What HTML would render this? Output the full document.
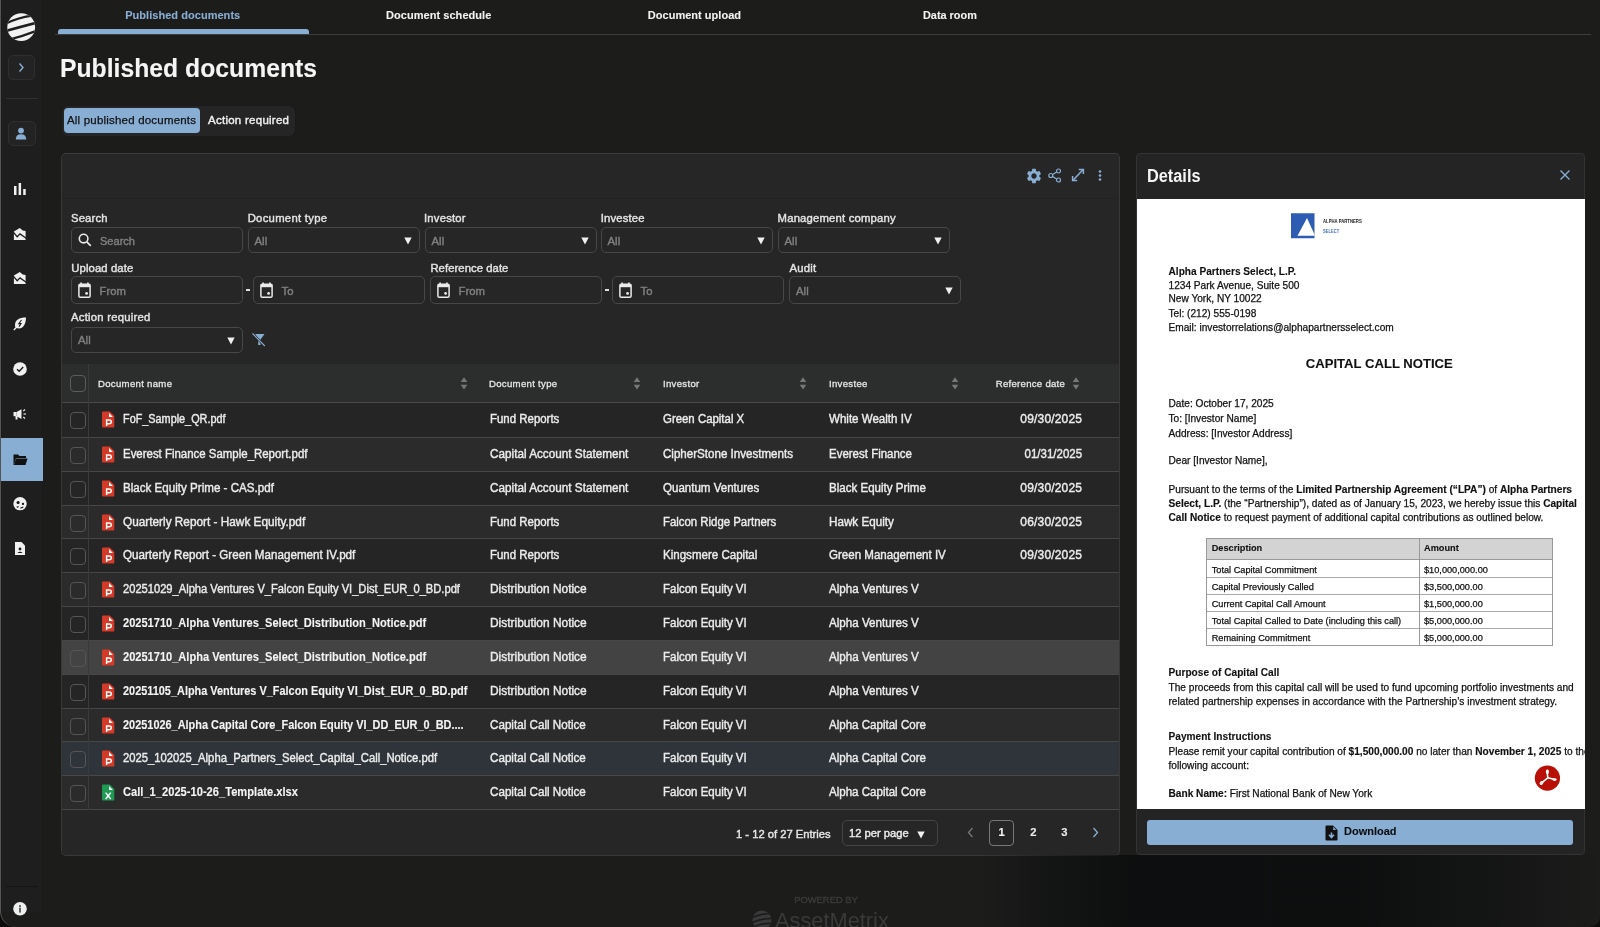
<!DOCTYPE html>
<html><head><meta charset="utf-8">
<style>
*{box-sizing:border-box;margin:0;padding:0}
html,body{width:1600px;height:927px;overflow:hidden;background:#1c1c1c;font-family:"Liberation Sans",sans-serif;color:#ececec}
.a{position:absolute}
.t{line-height:20px;white-space:nowrap;-webkit-text-stroke:0.4px currentColor}
.t b{-webkit-text-stroke:0.15px currentColor}
.d{-webkit-text-stroke:0.12px currentColor}
#wrap{position:absolute;left:0;top:0;width:1600px;height:927px;will-change:transform;background:#1c1c1c;overflow:hidden}
svg{display:block}
</style></head>
<body><div id="wrap">

<div class="a" style="left:0px;top:0px;width:1600px;height:927px;background:#1c1c1c"></div>
<div class="a" style="left:0px;top:0px;width:1600px;height:927px;background:#0c0c0c"></div>
<div class="a" style="left:0px;top:0px;width:1600px;height:927px;background:#1c1c1b;border-left:1.5px solid #555;border-bottom-left-radius:16px;border-bottom-right-radius:10px"></div>
<div class="a" style="left:1.5px;top:0px;width:41px;height:912px;background:#1e1e1e;border-right:1px solid #1a1a1a"></div>
<svg class="a" style="left:6px;top:12px" width="30" height="30" viewBox="0 0 30 30">
<defs><clipPath id="lc"><circle cx="15.2" cy="15.2" r="13.9"/></clipPath></defs>
<g clip-path="url(#lc)">
<rect width="30" height="30" fill="#f2f2f2"/>
<path d="M0.5 11.2 Q11 6 26 3.6" fill="none" stroke="#1e1e1e" stroke-width="2.3"/>
<path d="M-1 19.3 Q13 15.2 31 10.6" fill="none" stroke="#1e1e1e" stroke-width="2.6"/>
<path d="M3 27.6 Q17 24.2 31 18.6" fill="none" stroke="#1e1e1e" stroke-width="2.4"/>
</g></svg>
<div class="a" style="left:8px;top:55px;width:27px;height:25px;background:#232323;border:1px solid #2f2f2f;border-radius:5px"></div>
<svg class="a" style="left:16px;top:62px" width="10" height="11" viewBox="0 0 10 11"><path d="M3.5 1.5 L7 5.5 L3.5 9.5" fill="none" stroke="#89aed4" stroke-width="1.4"/></svg>
<div class="a" style="left:6px;top:98px;width:32px;height:1px;background:#303030"></div>
<div class="a" style="left:8px;top:121px;width:28px;height:25px;background:#232323;border:1px solid #2f2f2f;border-radius:5px"></div>
<svg class="a" style="left:15px;top:127px" width="12" height="13" viewBox="0 0 12 13"><circle cx="6" cy="3.6" r="2.9" fill="#89aed4"/><path d="M0.8 12.5 Q0.8 7.3 6 7.3 Q11.2 7.3 11.2 12.5 Z" fill="#89aed4"/></svg>
<svg class="a" style="left:13px;top:182px" width="14" height="14" viewBox="0 0 14 14" fill="#f0f0f0"><rect x="1" y="4" width="2.5" height="9"/><rect x="5.6" y="1" width="2.5" height="12"/><rect x="10.2" y="7" width="2.5" height="6"/></svg>
<svg class="a" style="left:13px;top:227px" width="14" height="14" viewBox="0 0 14 14"><path d="M0.9 4.6 L6.8 1 L9.7 3.6 L12.6 4 L12.6 13 L0.9 13 Z" fill="#f0f0f0"/><path d="M0.3 5.2 L4.2 9.7 L7 6.9 L13.2 11.2" stroke="#1e1e1e" stroke-width="1.3" fill="none"/></svg>
<svg class="a" style="left:13px;top:271px" width="14" height="14" viewBox="0 0 14 14"><path d="M0.9 4.6 L6.8 1 L9.7 3.6 L12.6 4 L12.6 13 L0.9 13 Z" fill="#f0f0f0"/><path d="M0.3 5.2 L4.2 9.7 L7 6.9 L13.2 11.2" stroke="#1e1e1e" stroke-width="1.3" fill="none"/></svg>
<svg class="a" style="left:13px;top:316px" width="14" height="15" viewBox="0 0 14 15"><path d="M2 9 C2 4 6 1.5 13 1.5 C13 8 10 12.5 6 12.5 C4 12.5 2.8 11.5 2 10.5 Z" fill="#f0f0f0"/><path d="M0.8 14 L4 10.8" stroke="#f0f0f0" stroke-width="1.4"/><path d="M8.5 4 L5.8 7.6 L8 7.6 L6 10.6" fill="none" stroke="#1a1a1a" stroke-width="1.1"/></svg>
<svg class="a" style="left:13px;top:362px" width="14" height="14" viewBox="0 0 14 14"><circle cx="7" cy="7" r="6.8" fill="#f0f0f0"/><path d="M4 7.2 L6.2 9.2 L10.2 5" fill="none" stroke="#1a1a1a" stroke-width="1.4"/></svg>
<svg class="a" style="left:13px;top:407px" width="14" height="14" viewBox="0 0 14 14" fill="#f0f0f0"><rect x="0.5" y="5" width="3" height="4.2"/><path d="M3.5 5 L8.5 2.2 L8.5 12 L3.5 9.2 Z"/><rect x="2.5" y="9" width="2" height="3.5"/><path d="M10.3 4 L12 2.5" stroke="#f0f0f0" stroke-width="1.1"/><path d="M10.5 7 L13 7" stroke="#f0f0f0" stroke-width="1.1"/><path d="M10.3 10 L12 11.5" stroke="#f0f0f0" stroke-width="1.1"/></svg>
<div class="a" style="left:1px;top:438px;width:42px;height:43px;background:#89aed4"></div>
<svg class="a" style="left:13px;top:453px" width="15" height="13" viewBox="0 0 15 13"><path d="M0.5 1.5 L5 1.5 L6.5 3 L13 3 L13 5 L3 5 L1 12 L0.5 12 Z" fill="#111"/><path d="M3 5.5 L14.5 5.5 L12.5 12 L1 12 Z" fill="#111"/></svg>
<svg class="a" style="left:12px;top:496px" width="15" height="15" viewBox="0 0 15 15"><circle cx="8.05" cy="7.66" r="6.7" fill="#f0f0f0"/><circle cx="6.1" cy="6.5" r="1.55" fill="#111"/><circle cx="11" cy="7.9" r="1.15" fill="#111"/><path d="M4.2 10.8 L7 10.1 L5.8 12.1 Z" fill="#111"/><path d="M8.4 12.3 L11.3 10.9" stroke="#111" stroke-width="1.1"/></svg>
<svg class="a" style="left:14px;top:541px" width="12" height="15" viewBox="0 0 12 15"><path d="M1 1 L7.5 1 L11 4.5 L11 14 L1 14 Z" fill="#f0f0f0"/><circle cx="6" cy="8" r="1.4" fill="#1a1a1a"/><path d="M3.3 12 Q6 9.6 8.7 12 Z" fill="#1a1a1a"/></svg>
<div class="a" style="left:6px;top:886px;width:32px;height:1px;background:#141414"></div>
<svg class="a" style="left:13px;top:902px" width="14" height="14" viewBox="0 0 14 14"><circle cx="7" cy="6.8" r="6.8" fill="#eef0f0"/><circle cx="7" cy="3.9" r="1" fill="#444"/><rect x="6.2" y="5.6" width="1.6" height="5" fill="#444"/></svg>
<div class="a" style="left:55px;top:34px;width:1536px;height:1px;background:#3d3d3d"></div>
<div class="a" style="left:58px;top:29px;width:251px;height:5px;background:#89aed4;border-radius:3px 3px 0 0"></div>
<div class="a t" style="left:125.2px;top:5.00px;font-size:11px;color:#89aed4;font-weight:bold;-webkit-text-stroke:0.1px currentColor;letter-spacing:0.040px;">Published documents</div>
<div class="a t" style="left:385.95px;top:5.00px;font-size:11px;color:#f2f2f2;font-weight:bold;-webkit-text-stroke:0.1px currentColor;letter-spacing:0.055px;">Document schedule</div>
<div class="a t" style="left:647.8000000000001px;top:5.00px;font-size:11px;color:#f2f2f2;font-weight:bold;-webkit-text-stroke:0.1px currentColor;letter-spacing:0.023px;">Document upload</div>
<div class="a t" style="left:923.4000000000001px;top:5.00px;font-size:11px;color:#f2f2f2;font-weight:bold;-webkit-text-stroke:0.1px currentColor;transform:scaleX(0.9890);transform-origin:0 0;">Data room</div>
<div class="a t" style="left:59.7px;top:58.00px;font-size:25.5px;color:#f5f5f5;font-weight:bold;-webkit-text-stroke:0.1px currentColor;transform:scaleX(0.9701);transform-origin:0 0;">Published documents</div>
<div class="a" style="left:61.5px;top:105.8px;width:233.3px;height:30px;background:#252525;border-radius:6px;box-shadow:0 0 0 1px #1a1a1a"></div>
<div class="a" style="left:63.6px;top:108.3px;width:136.4px;height:24.7px;background:#89aed4;border-radius:4px"></div>
<div class="a t" style="left:67px;top:110.00px;font-size:11.5px;color:#111;-webkit-text-stroke:0.25px currentColor;letter-spacing:0.198px;">All published documents</div>
<div class="a t" style="left:208px;top:110.00px;font-size:11.5px;color:#f0f0f0;letter-spacing:0.261px;">Action required</div>
<div class="a" style="left:61px;top:153px;width:1059px;height:703px;background:#262626;border:1px solid #383838;border-top-color:#3c3c3c;border-radius:5px"></div>
<div class="a" style="left:62px;top:198px;width:1056px;height:1px;background:#222"></div>
<svg class="a" style="left:1025px;top:166.5px" width="18" height="18" viewBox="0 0 24 24"><path fill="#89aed4" d="M19.14 12.94c.04-.3.06-.61.06-.94 0-.32-.02-.64-.07-.94l2.03-1.58a.49.49 0 0 0 .12-.61l-1.92-3.32a.488.488 0 0 0-.59-.22l-2.39.96c-.5-.38-1.03-.7-1.62-.94l-.36-2.54a.484.484 0 0 0-.48-.41h-3.84c-.24 0-.43.17-.47.41l-.36 2.54c-.59.24-1.13.57-1.62.94l-2.39-.96c-.22-.08-.47 0-.59.22L2.74 8.87c-.12.21-.08.47.12.61l2.03 1.58c-.05.3-.09.63-.09.94s.02.64.07.94l-2.03 1.58a.49.49 0 0 0-.12.61l1.92 3.32c.12.22.37.29.59.22l2.39-.96c.5.38 1.03.7 1.62.94l.36 2.54c.05.24.24.41.48.41h3.84c.24 0 .44-.17.47-.41l.36-2.54c.59-.24 1.13-.56 1.62-.94l2.39.96c.22.08.47 0 .59-.22l1.92-3.32c.12-.22.07-.47-.12-.61l-2.01-1.58zM12 15.6c-1.98 0-3.6-1.62-3.6-3.6s1.62-3.6 3.6-3.6 3.6 1.62 3.6 3.6-1.62 3.6-3.6 3.6z"/></svg>
<svg class="a" style="left:1048px;top:168px" width="14" height="15" viewBox="0 0 14 15"><g fill="none" stroke="#89aed4" stroke-width="1.2"><circle cx="10.5" cy="3" r="2"/><circle cx="2.8" cy="7.5" r="2"/><circle cx="10.5" cy="12" r="2"/><path d="M4.6 6.5 L8.7 4 M4.6 8.5 L8.7 11"/></g></svg>
<svg class="a" style="left:1071px;top:168px" width="14" height="15" viewBox="0 0 14 15"><g fill="none" stroke="#89aed4" stroke-width="1.5"><path d="M7.8 1.4 L12.4 1.4 L12.4 6"/><path d="M12.2 1.6 L1.8 12.6"/><path d="M1.6 8 L1.6 12.6 L6.2 12.6"/></g></svg>
<svg class="a" style="left:1097px;top:169px" width="6" height="13" viewBox="0 0 6 13"><g fill="#89aed4"><circle cx="3" cy="2.5" r="1.3"/><circle cx="3" cy="6.5" r="1.3"/><circle cx="3" cy="10.5" r="1.3"/></g></svg>
<div class="a t" style="left:71px;top:208.00px;font-size:11.3px;color:#e4e4e4;letter-spacing:0.140px;">Search</div>
<div class="a t" style="left:247.7px;top:208.00px;font-size:11.3px;color:#e4e4e4;letter-spacing:0.275px;">Document type</div>
<div class="a t" style="left:424px;top:208.00px;font-size:11.3px;color:#e4e4e4;letter-spacing:0.201px;">Investor</div>
<div class="a t" style="left:600.8px;top:208.00px;font-size:11.3px;color:#e4e4e4;letter-spacing:0.141px;">Investee</div>
<div class="a t" style="left:777.6px;top:208.00px;font-size:11.3px;color:#e4e4e4;letter-spacing:0.180px;">Management company</div>
<div class="a" style="left:71px;top:227px;width:172px;height:26px;border:1px solid #474747;border-radius:5px"></div>
<svg class="a" style="left:78px;top:233px" width="14" height="14" viewBox="0 0 14 14"><circle cx="5.6" cy="5.6" r="4.3" fill="none" stroke="#e8e8e8" stroke-width="1.6"/><path d="M8.8 8.8 L12.8 12.8" stroke="#e8e8e8" stroke-width="1.7"/></svg>
<div class="a t" style="left:100px;top:231.00px;font-size:11.3px;color:#808080;transform:scaleX(0.9776);transform-origin:0 0;">Search</div>
<div class="a" style="left:248px;top:227px;width:172px;height:26px;border:1px solid #474747;border-radius:5px"></div>
<div class="a t" style="left:254.5px;top:231.00px;font-size:11.3px;color:#808080;letter-spacing:0.071px;">All</div>
<svg class="a" style="left:404px;top:237px" width="8" height="8" viewBox="0 0 8 8"><path d="M0.3 0.5 L7.7 0.5 L4 7.5 Z" fill="#f0f0f0"/></svg>
<div class="a" style="left:425px;top:227px;width:172px;height:26px;border:1px solid #474747;border-radius:5px"></div>
<div class="a t" style="left:431.5px;top:231.00px;font-size:11.3px;color:#808080;letter-spacing:0.071px;">All</div>
<svg class="a" style="left:581px;top:237px" width="8" height="8" viewBox="0 0 8 8"><path d="M0.3 0.5 L7.7 0.5 L4 7.5 Z" fill="#f0f0f0"/></svg>
<div class="a" style="left:601px;top:227px;width:172px;height:26px;border:1px solid #474747;border-radius:5px"></div>
<div class="a t" style="left:607.5px;top:231.00px;font-size:11.3px;color:#808080;letter-spacing:0.071px;">All</div>
<svg class="a" style="left:757px;top:237px" width="8" height="8" viewBox="0 0 8 8"><path d="M0.3 0.5 L7.7 0.5 L4 7.5 Z" fill="#f0f0f0"/></svg>
<div class="a" style="left:778px;top:227px;width:172px;height:26px;border:1px solid #474747;border-radius:5px"></div>
<div class="a t" style="left:784.5px;top:231.00px;font-size:11.3px;color:#808080;letter-spacing:0.071px;">All</div>
<svg class="a" style="left:934px;top:237px" width="8" height="8" viewBox="0 0 8 8"><path d="M0.3 0.5 L7.7 0.5 L4 7.5 Z" fill="#f0f0f0"/></svg>
<div class="a t" style="left:71.3px;top:258.00px;font-size:11.3px;color:#e4e4e4;letter-spacing:0.106px;">Upload date</div>
<div class="a t" style="left:430.4px;top:258.00px;font-size:11.3px;color:#e4e4e4;letter-spacing:0.057px;">Reference date</div>
<div class="a t" style="left:789.4px;top:258.00px;font-size:11.3px;color:#e4e4e4;letter-spacing:0.236px;">Audit</div>
<div class="a" style="left:71px;top:276.3px;width:172px;height:27.4px;border:1px solid #474747;border-radius:5px"></div>
<svg class="a" style="left:78px;top:282px" width="13" height="16" viewBox="0 0 13 16"><g fill="#eaeaea"><rect x="2.3" y="0.5" width="1.6" height="3"/><rect x="9.1" y="0.5" width="1.6" height="3"/></g><rect x="0.9" y="2.2" width="11.2" height="13" rx="1.3" fill="none" stroke="#eaeaea" stroke-width="1.5"/><rect x="0.9" y="2.2" width="11.2" height="3" fill="#eaeaea"/><circle cx="8.6" cy="11.4" r="1.4" fill="#eaeaea"/></svg>
<div class="a t" style="left:99.5px;top:281.00px;font-size:11.3px;color:#808080;letter-spacing:0.013px;">From</div>
<div class="a" style="left:253px;top:276.3px;width:172px;height:27.4px;border:1px solid #474747;border-radius:5px"></div>
<svg class="a" style="left:260px;top:282px" width="13" height="16" viewBox="0 0 13 16"><g fill="#eaeaea"><rect x="2.3" y="0.5" width="1.6" height="3"/><rect x="9.1" y="0.5" width="1.6" height="3"/></g><rect x="0.9" y="2.2" width="11.2" height="13" rx="1.3" fill="none" stroke="#eaeaea" stroke-width="1.5"/><rect x="0.9" y="2.2" width="11.2" height="3" fill="#eaeaea"/><circle cx="8.6" cy="11.4" r="1.4" fill="#eaeaea"/></svg>
<div class="a t" style="left:281.5px;top:281.00px;font-size:11.3px;color:#808080;letter-spacing:0.166px;">To</div>
<div class="a" style="left:430px;top:276.3px;width:172px;height:27.4px;border:1px solid #474747;border-radius:5px"></div>
<svg class="a" style="left:437px;top:282px" width="13" height="16" viewBox="0 0 13 16"><g fill="#eaeaea"><rect x="2.3" y="0.5" width="1.6" height="3"/><rect x="9.1" y="0.5" width="1.6" height="3"/></g><rect x="0.9" y="2.2" width="11.2" height="13" rx="1.3" fill="none" stroke="#eaeaea" stroke-width="1.5"/><rect x="0.9" y="2.2" width="11.2" height="3" fill="#eaeaea"/><circle cx="8.6" cy="11.4" r="1.4" fill="#eaeaea"/></svg>
<div class="a t" style="left:458.5px;top:281.00px;font-size:11.3px;color:#808080;letter-spacing:0.013px;">From</div>
<div class="a" style="left:612px;top:276.3px;width:172px;height:27.4px;border:1px solid #474747;border-radius:5px"></div>
<svg class="a" style="left:619px;top:282px" width="13" height="16" viewBox="0 0 13 16"><g fill="#eaeaea"><rect x="2.3" y="0.5" width="1.6" height="3"/><rect x="9.1" y="0.5" width="1.6" height="3"/></g><rect x="0.9" y="2.2" width="11.2" height="13" rx="1.3" fill="none" stroke="#eaeaea" stroke-width="1.5"/><rect x="0.9" y="2.2" width="11.2" height="3" fill="#eaeaea"/><circle cx="8.6" cy="11.4" r="1.4" fill="#eaeaea"/></svg>
<div class="a t" style="left:640.5px;top:281.00px;font-size:11.3px;color:#808080;letter-spacing:0.166px;">To</div>
<div class="a" style="left:246px;top:289px;width:4px;height:1.5px;background:#e0e0e0"></div>
<div class="a" style="left:605px;top:289px;width:4px;height:1.5px;background:#e0e0e0"></div>
<div class="a" style="left:789px;top:276.3px;width:172px;height:27.4px;border:1px solid #474747;border-radius:5px"></div>
<div class="a t" style="left:796px;top:281.00px;font-size:11.3px;color:#808080;letter-spacing:0.071px;">All</div>
<svg class="a" style="left:945px;top:287px" width="8" height="8" viewBox="0 0 8 8"><path d="M0.3 0.5 L7.7 0.5 L4 7.5 Z" fill="#f0f0f0"/></svg>
<div class="a t" style="left:71px;top:307.00px;font-size:11.3px;color:#e4e4e4;letter-spacing:0.236px;">Action required</div>
<div class="a" style="left:71px;top:327px;width:172px;height:26px;border:1px solid #474747;border-radius:5px"></div>
<div class="a t" style="left:78px;top:330.00px;font-size:11.3px;color:#808080;letter-spacing:0.071px;">All</div>
<svg class="a" style="left:227px;top:337px" width="8" height="8" viewBox="0 0 8 8"><path d="M0.3 0.5 L7.7 0.5 L4 7.5 Z" fill="#f0f0f0"/></svg>
<svg class="a" style="left:251px;top:332px" width="15" height="15" viewBox="0 0 15 15"><path d="M4 2 L13.5 2 L9.5 7.5 L9.5 13 L7.2 13 L7.2 7.5 Z" fill="#89aed4"/><path d="M1.5 1.5 L13.8 14" stroke="#262626" stroke-width="2.4"/><path d="M1.5 1.5 L13.8 14" stroke="#89aed4" stroke-width="1.1"/></svg>
<div class="a" style="left:62px;top:364px;width:1057px;height:38px;background:#2c2d2d"></div>
<div class="a" style="left:62px;top:402px;width:1057px;height:1px;background:#4a4a4a"></div>
<div class="a" style="left:70px;top:375px;width:16px;height:17px;border:1.5px solid #5c5c5c;border-radius:4px"></div>
<div class="a t" style="left:98px;top:374.00px;font-size:9.6px;color:#e6e6e6;-webkit-text-stroke:0.3px currentColor;letter-spacing:0.300px;">Document name</div>
<div class="a t" style="left:489px;top:374.00px;font-size:9.6px;color:#e6e6e6;-webkit-text-stroke:0.3px currentColor;letter-spacing:0.300px;">Document type</div>
<div class="a t" style="left:663px;top:374.00px;font-size:9.6px;color:#e6e6e6;-webkit-text-stroke:0.3px currentColor;letter-spacing:0.300px;">Investor</div>
<div class="a t" style="left:829px;top:374.00px;font-size:9.6px;color:#e6e6e6;-webkit-text-stroke:0.3px currentColor;letter-spacing:0.300px;">Investee</div>
<div class="a t" style="right:534.83px;top:374.00px;font-size:9.6px;color:#e6e6e6;-webkit-text-stroke:0.3px currentColor;letter-spacing:0.274px;">Reference date</div>
<svg class="a" style="left:460px;top:377px" width="8" height="13" viewBox="0 0 8 13"><path d="M4 0.3 L7.3 5 L0.7 5 Z M4 12.5 L7.3 7.8 L0.7 7.8 Z" fill="#777"/></svg>
<svg class="a" style="left:633px;top:377px" width="8" height="13" viewBox="0 0 8 13"><path d="M4 0.3 L7.3 5 L0.7 5 Z M4 12.5 L7.3 7.8 L0.7 7.8 Z" fill="#777"/></svg>
<svg class="a" style="left:799px;top:377px" width="8" height="13" viewBox="0 0 8 13"><path d="M4 0.3 L7.3 5 L0.7 5 Z M4 12.5 L7.3 7.8 L0.7 7.8 Z" fill="#777"/></svg>
<svg class="a" style="left:951px;top:377px" width="8" height="13" viewBox="0 0 8 13"><path d="M4 0.3 L7.3 5 L0.7 5 Z M4 12.5 L7.3 7.8 L0.7 7.8 Z" fill="#777"/></svg>
<svg class="a" style="left:1072px;top:377px" width="8" height="13" viewBox="0 0 8 13"><path d="M4 0.3 L7.3 5 L0.7 5 Z M4 12.5 L7.3 7.8 L0.7 7.8 Z" fill="#777"/></svg>
<div class="a" style="left:62px;top:403px;width:1057px;height:34px;background:#252525"></div>
<div class="a" style="left:70px;top:412px;width:16px;height:17px;border:1.5px solid #555;border-radius:4px"></div>
<svg class="a" style="left:101px;top:411px" width="14" height="17" viewBox="0 0 14 17"><path d="M2 0.5 L8.8 0.5 L13.3 5 L13.3 15.5 Q13.3 16.5 12.3 16.5 L2 16.5 Q1 16.5 1 15.5 L1 1.5 Q1 0.5 2 0.5 Z" fill="#d43a28"/><path d="M8 2 L11.9 6.1 L8 6.1 Z" fill="#fff"/><path d="M5.6 15 L5.6 8.9 L8.1 8.9 Q10.3 8.9 10.3 10.8 Q10.3 12.7 8.1 12.7 L5.6 12.7" fill="none" stroke="#fff" stroke-width="1.45"/></svg>
<div class="a t" style="left:122.5px;top:409.00px;font-size:12px;color:#ececec;transform:scaleX(0.9041);transform-origin:0 0;">FoF_Sample_QR.pdf</div>
<div class="a t" style="left:489.5px;top:409.00px;font-size:12px;color:#ececec;transform:scaleX(0.9533);transform-origin:0 0;">Fund Reports</div>
<div class="a t" style="left:663.3px;top:409.00px;font-size:12px;color:#ececec;transform:scaleX(0.9511);transform-origin:0 0;">Green Capital X</div>
<div class="a t" style="left:829px;top:409.00px;font-size:12px;color:#ececec;transform:scaleX(0.9626);transform-origin:0 0;">White Wealth IV</div>
<div class="a t" style="right:517.82px;top:409.00px;font-size:12px;color:#ececec;letter-spacing:0.183px;">09/30/2025</div>
<div class="a" style="left:62px;top:438px;width:1057px;height:33px;background:#2b2b2b"></div>
<div class="a" style="left:70px;top:447px;width:16px;height:17px;border:1.5px solid #555;border-radius:4px"></div>
<svg class="a" style="left:101px;top:446px" width="14" height="17" viewBox="0 0 14 17"><path d="M2 0.5 L8.8 0.5 L13.3 5 L13.3 15.5 Q13.3 16.5 12.3 16.5 L2 16.5 Q1 16.5 1 15.5 L1 1.5 Q1 0.5 2 0.5 Z" fill="#d43a28"/><path d="M8 2 L11.9 6.1 L8 6.1 Z" fill="#fff"/><path d="M5.6 15 L5.6 8.9 L8.1 8.9 Q10.3 8.9 10.3 10.8 Q10.3 12.7 8.1 12.7 L5.6 12.7" fill="none" stroke="#fff" stroke-width="1.45"/></svg>
<div class="a t" style="left:122.5px;top:444.00px;font-size:12px;color:#ececec;transform:scaleX(0.9534);transform-origin:0 0;">Everest Finance Sample_Report.pdf</div>
<div class="a t" style="left:489.5px;top:444.00px;font-size:12px;color:#ececec;transform:scaleX(0.9780);transform-origin:0 0;">Capital Account Statement</div>
<div class="a t" style="left:663.3px;top:444.00px;font-size:12px;color:#ececec;transform:scaleX(0.9649);transform-origin:0 0;">CipherStone Investments</div>
<div class="a t" style="left:829px;top:444.00px;font-size:12px;color:#ececec;transform:scaleX(0.9573);transform-origin:0 0;">Everest Finance</div>
<div class="a t" style="right:518.00px;top:444.00px;font-size:12px;color:#ececec;transform:scaleX(0.9575);transform-origin:100% 0;">01/31/2025</div>
<div class="a" style="left:62px;top:472px;width:1057px;height:33px;background:#252525"></div>
<div class="a" style="left:70px;top:481px;width:16px;height:17px;border:1.5px solid #555;border-radius:4px"></div>
<svg class="a" style="left:101px;top:480px" width="14" height="17" viewBox="0 0 14 17"><path d="M2 0.5 L8.8 0.5 L13.3 5 L13.3 15.5 Q13.3 16.5 12.3 16.5 L2 16.5 Q1 16.5 1 15.5 L1 1.5 Q1 0.5 2 0.5 Z" fill="#d43a28"/><path d="M8 2 L11.9 6.1 L8 6.1 Z" fill="#fff"/><path d="M5.6 15 L5.6 8.9 L8.1 8.9 Q10.3 8.9 10.3 10.8 Q10.3 12.7 8.1 12.7 L5.6 12.7" fill="none" stroke="#fff" stroke-width="1.45"/></svg>
<div class="a t" style="left:122.5px;top:478.00px;font-size:12px;color:#ececec;transform:scaleX(0.9670);transform-origin:0 0;">Black Equity Prime - CAS.pdf</div>
<div class="a t" style="left:489.5px;top:478.00px;font-size:12px;color:#ececec;transform:scaleX(0.9780);transform-origin:0 0;">Capital Account Statement</div>
<div class="a t" style="left:663.3px;top:478.00px;font-size:12px;color:#ececec;transform:scaleX(0.9615);transform-origin:0 0;">Quantum Ventures</div>
<div class="a t" style="left:829px;top:478.00px;font-size:12px;color:#ececec;transform:scaleX(0.9623);transform-origin:0 0;">Black Equity Prime</div>
<div class="a t" style="right:517.82px;top:478.00px;font-size:12px;color:#ececec;letter-spacing:0.183px;">09/30/2025</div>
<div class="a" style="left:62px;top:506px;width:1057px;height:32px;background:#2b2b2b"></div>
<div class="a" style="left:70px;top:515px;width:16px;height:17px;border:1.5px solid #555;border-radius:4px"></div>
<svg class="a" style="left:101px;top:514px" width="14" height="17" viewBox="0 0 14 17"><path d="M2 0.5 L8.8 0.5 L13.3 5 L13.3 15.5 Q13.3 16.5 12.3 16.5 L2 16.5 Q1 16.5 1 15.5 L1 1.5 Q1 0.5 2 0.5 Z" fill="#d43a28"/><path d="M8 2 L11.9 6.1 L8 6.1 Z" fill="#fff"/><path d="M5.6 15 L5.6 8.9 L8.1 8.9 Q10.3 8.9 10.3 10.8 Q10.3 12.7 8.1 12.7 L5.6 12.7" fill="none" stroke="#fff" stroke-width="1.45"/></svg>
<div class="a t" style="left:122.5px;top:512.00px;font-size:12px;color:#ececec;transform:scaleX(0.9840);transform-origin:0 0;">Quarterly Report - Hawk Equity.pdf</div>
<div class="a t" style="left:489.5px;top:512.00px;font-size:12px;color:#ececec;transform:scaleX(0.9533);transform-origin:0 0;">Fund Reports</div>
<div class="a t" style="left:663.3px;top:512.00px;font-size:12px;color:#ececec;transform:scaleX(0.9490);transform-origin:0 0;">Falcon Ridge Partners</div>
<div class="a t" style="left:829px;top:512.00px;font-size:12px;color:#ececec;transform:scaleX(0.9717);transform-origin:0 0;">Hawk Equity</div>
<div class="a t" style="right:517.82px;top:512.00px;font-size:12px;color:#ececec;letter-spacing:0.183px;">06/30/2025</div>
<div class="a" style="left:62px;top:539px;width:1057px;height:33px;background:#252525"></div>
<div class="a" style="left:70px;top:548px;width:16px;height:17px;border:1.5px solid #555;border-radius:4px"></div>
<svg class="a" style="left:101px;top:547px" width="14" height="17" viewBox="0 0 14 17"><path d="M2 0.5 L8.8 0.5 L13.3 5 L13.3 15.5 Q13.3 16.5 12.3 16.5 L2 16.5 Q1 16.5 1 15.5 L1 1.5 Q1 0.5 2 0.5 Z" fill="#d43a28"/><path d="M8 2 L11.9 6.1 L8 6.1 Z" fill="#fff"/><path d="M5.6 15 L5.6 8.9 L8.1 8.9 Q10.3 8.9 10.3 10.8 Q10.3 12.7 8.1 12.7 L5.6 12.7" fill="none" stroke="#fff" stroke-width="1.45"/></svg>
<div class="a t" style="left:122.5px;top:545.00px;font-size:12px;color:#ececec;transform:scaleX(0.9693);transform-origin:0 0;">Quarterly Report - Green Management IV.pdf</div>
<div class="a t" style="left:489.5px;top:545.00px;font-size:12px;color:#ececec;transform:scaleX(0.9533);transform-origin:0 0;">Fund Reports</div>
<div class="a t" style="left:663.3px;top:545.00px;font-size:12px;color:#ececec;transform:scaleX(0.9620);transform-origin:0 0;">Kingsmere Capital</div>
<div class="a t" style="left:829px;top:545.00px;font-size:12px;color:#ececec;transform:scaleX(0.9620);transform-origin:0 0;">Green Management IV</div>
<div class="a t" style="right:517.82px;top:545.00px;font-size:12px;color:#ececec;letter-spacing:0.183px;">09/30/2025</div>
<div class="a" style="left:62px;top:573px;width:1057px;height:33px;background:#2b2b2b"></div>
<div class="a" style="left:70px;top:582px;width:16px;height:17px;border:1.5px solid #555;border-radius:4px"></div>
<svg class="a" style="left:101px;top:581px" width="14" height="17" viewBox="0 0 14 17"><path d="M2 0.5 L8.8 0.5 L13.3 5 L13.3 15.5 Q13.3 16.5 12.3 16.5 L2 16.5 Q1 16.5 1 15.5 L1 1.5 Q1 0.5 2 0.5 Z" fill="#d43a28"/><path d="M8 2 L11.9 6.1 L8 6.1 Z" fill="#fff"/><path d="M5.6 15 L5.6 8.9 L8.1 8.9 Q10.3 8.9 10.3 10.8 Q10.3 12.7 8.1 12.7 L5.6 12.7" fill="none" stroke="#fff" stroke-width="1.45"/></svg>
<div class="a t" style="left:122.5px;top:579.00px;font-size:12px;color:#ececec;transform:scaleX(0.9284);transform-origin:0 0;">20251029_Alpha Ventures V_Falcon Equity VI_Dist_EUR_0_BD.pdf</div>
<div class="a t" style="left:489.5px;top:579.00px;font-size:12px;color:#ececec;transform:scaleX(0.9932);transform-origin:0 0;">Distribution Notice</div>
<div class="a t" style="left:663.3px;top:579.00px;font-size:12px;color:#ececec;transform:scaleX(0.9580);transform-origin:0 0;">Falcon Equity VI</div>
<div class="a t" style="left:829px;top:579.00px;font-size:12px;color:#ececec;transform:scaleX(0.9674);transform-origin:0 0;">Alpha Ventures V</div>
<div class="a" style="left:62px;top:607px;width:1057px;height:33px;background:#252525"></div>
<div class="a" style="left:70px;top:616px;width:16px;height:17px;border:1.5px solid #555;border-radius:4px"></div>
<svg class="a" style="left:101px;top:615px" width="14" height="17" viewBox="0 0 14 17"><path d="M2 0.5 L8.8 0.5 L13.3 5 L13.3 15.5 Q13.3 16.5 12.3 16.5 L2 16.5 Q1 16.5 1 15.5 L1 1.5 Q1 0.5 2 0.5 Z" fill="#d43a28"/><path d="M8 2 L11.9 6.1 L8 6.1 Z" fill="#fff"/><path d="M5.6 15 L5.6 8.9 L8.1 8.9 Q10.3 8.9 10.3 10.8 Q10.3 12.7 8.1 12.7 L5.6 12.7" fill="none" stroke="#fff" stroke-width="1.45"/></svg>
<div class="a t" style="left:122.5px;top:613.00px;font-size:12px;color:#f4f4f4;font-weight:bold;-webkit-text-stroke:0.1px currentColor;transform:scaleX(0.9219);transform-origin:0 0;">20251710_Alpha Ventures_Select_Distribution_Notice.pdf</div>
<div class="a t" style="left:489.5px;top:613.00px;font-size:12px;color:#ececec;transform:scaleX(0.9932);transform-origin:0 0;">Distribution Notice</div>
<div class="a t" style="left:663.3px;top:613.00px;font-size:12px;color:#ececec;transform:scaleX(0.9580);transform-origin:0 0;">Falcon Equity VI</div>
<div class="a t" style="left:829px;top:613.00px;font-size:12px;color:#ececec;transform:scaleX(0.9674);transform-origin:0 0;">Alpha Ventures V</div>
<div class="a" style="left:62px;top:641px;width:1057px;height:33px;background:#434343"></div>
<div class="a" style="left:70px;top:650px;width:16px;height:17px;border:1.5px solid #555;border-radius:4px"></div>
<svg class="a" style="left:101px;top:649px" width="14" height="17" viewBox="0 0 14 17"><path d="M2 0.5 L8.8 0.5 L13.3 5 L13.3 15.5 Q13.3 16.5 12.3 16.5 L2 16.5 Q1 16.5 1 15.5 L1 1.5 Q1 0.5 2 0.5 Z" fill="#d43a28"/><path d="M8 2 L11.9 6.1 L8 6.1 Z" fill="#fff"/><path d="M5.6 15 L5.6 8.9 L8.1 8.9 Q10.3 8.9 10.3 10.8 Q10.3 12.7 8.1 12.7 L5.6 12.7" fill="none" stroke="#fff" stroke-width="1.45"/></svg>
<div class="a t" style="left:122.5px;top:647.00px;font-size:12px;color:#f4f4f4;font-weight:bold;-webkit-text-stroke:0.1px currentColor;transform:scaleX(0.9219);transform-origin:0 0;">20251710_Alpha Ventures_Select_Distribution_Notice.pdf</div>
<div class="a t" style="left:489.5px;top:647.00px;font-size:12px;color:#ececec;transform:scaleX(0.9932);transform-origin:0 0;">Distribution Notice</div>
<div class="a t" style="left:663.3px;top:647.00px;font-size:12px;color:#ececec;transform:scaleX(0.9580);transform-origin:0 0;">Falcon Equity VI</div>
<div class="a t" style="left:829px;top:647.00px;font-size:12px;color:#ececec;transform:scaleX(0.9674);transform-origin:0 0;">Alpha Ventures V</div>
<div class="a" style="left:62px;top:675px;width:1057px;height:33px;background:#252525"></div>
<div class="a" style="left:70px;top:684px;width:16px;height:17px;border:1.5px solid #555;border-radius:4px"></div>
<svg class="a" style="left:101px;top:683px" width="14" height="17" viewBox="0 0 14 17"><path d="M2 0.5 L8.8 0.5 L13.3 5 L13.3 15.5 Q13.3 16.5 12.3 16.5 L2 16.5 Q1 16.5 1 15.5 L1 1.5 Q1 0.5 2 0.5 Z" fill="#d43a28"/><path d="M8 2 L11.9 6.1 L8 6.1 Z" fill="#fff"/><path d="M5.6 15 L5.6 8.9 L8.1 8.9 Q10.3 8.9 10.3 10.8 Q10.3 12.7 8.1 12.7 L5.6 12.7" fill="none" stroke="#fff" stroke-width="1.45"/></svg>
<div class="a t" style="left:122.5px;top:681.00px;font-size:12px;color:#f4f4f4;font-weight:bold;-webkit-text-stroke:0.1px currentColor;transform:scaleX(0.9092);transform-origin:0 0;">20251105_Alpha Ventures V_Falcon Equity VI_Dist_EUR_0_BD.pdf</div>
<div class="a t" style="left:489.5px;top:681.00px;font-size:12px;color:#ececec;transform:scaleX(0.9932);transform-origin:0 0;">Distribution Notice</div>
<div class="a t" style="left:663.3px;top:681.00px;font-size:12px;color:#ececec;transform:scaleX(0.9580);transform-origin:0 0;">Falcon Equity VI</div>
<div class="a t" style="left:829px;top:681.00px;font-size:12px;color:#ececec;transform:scaleX(0.9674);transform-origin:0 0;">Alpha Ventures V</div>
<div class="a" style="left:62px;top:709px;width:1057px;height:32px;background:#2b2b2b"></div>
<div class="a" style="left:70px;top:718px;width:16px;height:17px;border:1.5px solid #555;border-radius:4px"></div>
<svg class="a" style="left:101px;top:717px" width="14" height="17" viewBox="0 0 14 17"><path d="M2 0.5 L8.8 0.5 L13.3 5 L13.3 15.5 Q13.3 16.5 12.3 16.5 L2 16.5 Q1 16.5 1 15.5 L1 1.5 Q1 0.5 2 0.5 Z" fill="#d43a28"/><path d="M8 2 L11.9 6.1 L8 6.1 Z" fill="#fff"/><path d="M5.6 15 L5.6 8.9 L8.1 8.9 Q10.3 8.9 10.3 10.8 Q10.3 12.7 8.1 12.7 L5.6 12.7" fill="none" stroke="#fff" stroke-width="1.45"/></svg>
<div class="a t" style="left:122.5px;top:715.00px;font-size:12px;color:#f4f4f4;font-weight:bold;-webkit-text-stroke:0.1px currentColor;transform:scaleX(0.9104);transform-origin:0 0;">20251026_Alpha Capital Core_Falcon Equity VI_DD_EUR_0_BD....</div>
<div class="a t" style="left:489.5px;top:715.00px;font-size:12px;color:#ececec;transform:scaleX(0.9706);transform-origin:0 0;">Capital Call Notice</div>
<div class="a t" style="left:663.3px;top:715.00px;font-size:12px;color:#ececec;transform:scaleX(0.9580);transform-origin:0 0;">Falcon Equity VI</div>
<div class="a t" style="left:829px;top:715.00px;font-size:12px;color:#ececec;transform:scaleX(0.9621);transform-origin:0 0;">Alpha Capital Core</div>
<div class="a" style="left:62px;top:742px;width:1057px;height:33px;background:#2e3439"></div>
<div class="a" style="left:70px;top:751px;width:16px;height:17px;border:1.5px solid #555;border-radius:4px"></div>
<svg class="a" style="left:101px;top:750px" width="14" height="17" viewBox="0 0 14 17"><path d="M2 0.5 L8.8 0.5 L13.3 5 L13.3 15.5 Q13.3 16.5 12.3 16.5 L2 16.5 Q1 16.5 1 15.5 L1 1.5 Q1 0.5 2 0.5 Z" fill="#d43a28"/><path d="M8 2 L11.9 6.1 L8 6.1 Z" fill="#fff"/><path d="M5.6 15 L5.6 8.9 L8.1 8.9 Q10.3 8.9 10.3 10.8 Q10.3 12.7 8.1 12.7 L5.6 12.7" fill="none" stroke="#fff" stroke-width="1.45"/></svg>
<div class="a t" style="left:122.5px;top:748.00px;font-size:12px;color:#ececec;transform:scaleX(0.9379);transform-origin:0 0;">2025_102025_Alpha_Partners_Select_Capital_Call_Notice.pdf</div>
<div class="a t" style="left:489.5px;top:748.00px;font-size:12px;color:#ececec;transform:scaleX(0.9706);transform-origin:0 0;">Capital Call Notice</div>
<div class="a t" style="left:663.3px;top:748.00px;font-size:12px;color:#ececec;transform:scaleX(0.9580);transform-origin:0 0;">Falcon Equity VI</div>
<div class="a t" style="left:829px;top:748.00px;font-size:12px;color:#ececec;transform:scaleX(0.9621);transform-origin:0 0;">Alpha Capital Core</div>
<div class="a" style="left:62px;top:776px;width:1057px;height:33px;background:#2b2b2b"></div>
<div class="a" style="left:70px;top:785px;width:16px;height:17px;border:1.5px solid #555;border-radius:4px"></div>
<svg class="a" style="left:101px;top:784px" width="14" height="17" viewBox="0 0 14 17"><path d="M2 0.5 L8.8 0.5 L13.3 5 L13.3 15.5 Q13.3 16.5 12.3 16.5 L2 16.5 Q1 16.5 1 15.5 L1 1.5 Q1 0.5 2 0.5 Z" fill="#1e9a52"/><path d="M8 2 L11.9 6.1 L8 6.1 Z" fill="#fff"/><path d="M4.6 8.6 L9.8 15 M9.8 8.6 L4.6 15" fill="none" stroke="#fff" stroke-width="1.5"/></svg>
<div class="a t" style="left:122.5px;top:782.00px;font-size:12px;color:#f4f4f4;font-weight:bold;-webkit-text-stroke:0.1px currentColor;transform:scaleX(0.9281);transform-origin:0 0;">Call_1_2025-10-26_Template.xlsx</div>
<div class="a t" style="left:489.5px;top:782.00px;font-size:12px;color:#ececec;transform:scaleX(0.9706);transform-origin:0 0;">Capital Call Notice</div>
<div class="a t" style="left:663.3px;top:782.00px;font-size:12px;color:#ececec;transform:scaleX(0.9580);transform-origin:0 0;">Falcon Equity VI</div>
<div class="a t" style="left:829px;top:782.00px;font-size:12px;color:#ececec;transform:scaleX(0.9621);transform-origin:0 0;">Alpha Capital Core</div>
<div class="a" style="left:62px;top:437px;width:1057px;height:1px;background:#474747"></div>
<div class="a" style="left:62px;top:471px;width:1057px;height:1px;background:#474747"></div>
<div class="a" style="left:62px;top:505px;width:1057px;height:1px;background:#474747"></div>
<div class="a" style="left:62px;top:538px;width:1057px;height:1px;background:#474747"></div>
<div class="a" style="left:62px;top:572px;width:1057px;height:1px;background:#474747"></div>
<div class="a" style="left:62px;top:606px;width:1057px;height:1px;background:#474747"></div>
<div class="a" style="left:62px;top:640px;width:1057px;height:1px;background:#474747"></div>
<div class="a" style="left:62px;top:674px;width:1057px;height:1px;background:#474747"></div>
<div class="a" style="left:62px;top:708px;width:1057px;height:1px;background:#474747"></div>
<div class="a" style="left:62px;top:741px;width:1057px;height:1px;background:#474747"></div>
<div class="a" style="left:62px;top:775px;width:1057px;height:1px;background:#474747"></div>
<div class="a" style="left:62px;top:809px;width:1057px;height:1px;background:#474747"></div>
<div class="a" style="left:87.5px;top:364px;width:1px;height:446px;background:#3a3a3a"></div>
<div class="a t" style="left:736px;top:824.00px;font-size:11.2px;color:#e6e6e6;">1 - 12 of 27 Entries</div>
<div class="a" style="left:842px;top:820px;width:96px;height:26px;border:1px solid #444;border-radius:5px"></div>
<div class="a t" style="left:849px;top:823.00px;font-size:11.2px;color:#ececec;">12 per page</div>
<svg class="a" style="left:917px;top:831px" width="8" height="8" viewBox="0 0 8 8"><path d="M0.3 0.5 L7.7 0.5 L4 7.5 Z" fill="#f0f0f0"/></svg>
<svg class="a" style="left:966px;top:827px" width="9" height="11" viewBox="0 0 9 11"><path d="M6.5 1 L2.5 5.5 L6.5 10" fill="none" stroke="#777" stroke-width="1.3"/></svg>
<div class="a" style="left:989px;top:820px;width:25px;height:26px;border:1.5px solid #777;border-radius:4px"></div>
<div class="a t" style="left:801.5px;width:400px;text-align:center;top:822.00px;font-size:11.2px;color:#f4f4f4;font-weight:bold;-webkit-text-stroke:0.1px currentColor;">1</div>
<div class="a t" style="left:833.3px;width:400px;text-align:center;top:822.00px;font-size:11.2px;color:#f0f0f0;font-weight:bold;-webkit-text-stroke:0.1px currentColor;">2</div>
<div class="a t" style="left:864.3px;width:400px;text-align:center;top:822.00px;font-size:11.2px;color:#f0f0f0;font-weight:bold;-webkit-text-stroke:0.1px currentColor;">3</div>
<svg class="a" style="left:1091px;top:827px" width="9" height="11" viewBox="0 0 9 11"><path d="M2.5 1 L6.5 5.5 L2.5 10" fill="none" stroke="#89aed4" stroke-width="1.3"/></svg>
<div class="a" style="left:1136px;top:153px;width:449px;height:702px;background:#242424;border:1px solid #333;border-radius:4px"></div>
<div class="a t" style="left:1147px;top:166.00px;font-size:17.5px;color:#f4f4f4;font-weight:bold;-webkit-text-stroke:0px currentColor;transform:scaleX(0.9323);transform-origin:0 0;">Details</div>
<svg class="a" style="left:1559px;top:169px" width="12" height="12" viewBox="0 0 12 12"><path d="M1.5 1.5 L10.5 10.5 M10.5 1.5 L1.5 10.5" stroke="#89aed4" stroke-width="1.4"/></svg>
<div class="a" style="left:1137px;top:199px;width:448px;height:610px;background:#fff"></div>
<svg class="a" style="left:1290px;top:213px" width="26" height="26" viewBox="0 0 26 26"><rect x="1" y="0.25" width="23.5" height="25" fill="#2c5db3"/><path d="M7.5 22.75 L17 5 L24.5 21.5 L24.5 22.75 Z" fill="#fff"/></svg>
<div class="a" style="left:1323.25px;top:219.25px;font-size:10px;line-height:7.16px;height:7.16px;overflow:visible;font-weight:bold;color:#222;white-space:nowrap;transform:scale(0.425,0.52);transform-origin:0 0">ALPHA PARTNERS</div>
<div class="a" style="left:1323.25px;top:229.5px;font-size:10px;line-height:7.16px;height:7.16px;font-weight:bold;color:#3d6cc0;white-space:nowrap;transform:scale(0.41,0.45);transform-origin:0 0">SELECT</div>
<div class="a t" style="left:1168.5px;top:262.00px;font-size:10.15px;color:#111111;font-weight:bold;-webkit-text-stroke:0.1px currentColor;">Alpha Partners Select, L.P.</div>
<div class="a t" style="left:1168.5px;top:276.00px;font-size:10.15px;color:#111111;-webkit-text-stroke:0.25px currentColor;">1234 Park Avenue, Suite 500</div>
<div class="a t" style="left:1168.5px;top:289.00px;font-size:10.15px;color:#111111;-webkit-text-stroke:0.25px currentColor;">New York, NY 10022</div>
<div class="a t" style="left:1168.5px;top:304.00px;font-size:10.15px;color:#111111;-webkit-text-stroke:0.25px currentColor;">Tel: (212) 555-0198</div>
<div class="a t" style="left:1168.5px;top:318.00px;font-size:10.15px;color:#111111;-webkit-text-stroke:0.25px currentColor;">Email: investorrelations@alphapartnersselect.com</div>
<div class="a t" style="left:1179.3px;width:400px;text-align:center;top:354.00px;font-size:13.1px;color:#111;font-weight:bold;-webkit-text-stroke:0.1px currentColor;">CAPITAL CALL NOTICE</div>
<div class="a t" style="left:1168.5px;top:394.00px;font-size:10.15px;color:#111111;-webkit-text-stroke:0.25px currentColor;">Date: October 17, 2025</div>
<div class="a t" style="left:1168.5px;top:409.00px;font-size:10.15px;color:#111111;-webkit-text-stroke:0.25px currentColor;">To: [Investor Name]</div>
<div class="a t" style="left:1168.5px;top:424.00px;font-size:10.15px;color:#111111;-webkit-text-stroke:0.25px currentColor;">Address: [Investor Address]</div>
<div class="a t" style="left:1168.5px;top:451.00px;font-size:10.15px;color:#111111;-webkit-text-stroke:0.25px currentColor;">Dear [Investor Name],</div>
<div class="a t" style="left:1168.5px;top:480.00px;font-size:10.15px;color:#111111;-webkit-text-stroke:0.25px currentColor;">Pursuant to the terms of the <b>Limited Partnership Agreement (“LPA”)</b> of <b>Alpha Partners</b></div>
<div class="a t" style="left:1168.5px;top:494.00px;font-size:10.15px;color:#111111;-webkit-text-stroke:0.25px currentColor;"><b>Select, L.P.</b> (the “Partnership”), dated as of January 15, 2023, we hereby issue this <b>Capital</b></div>
<div class="a t" style="left:1168.5px;top:508.00px;font-size:10.15px;color:#111111;-webkit-text-stroke:0.25px currentColor;"><b>Call Notice</b> to request payment of additional capital contributions as outlined below.</div>
<div class="a" style="left:1206px;top:538px;width:347px;height:108px;border:1px solid #999"></div>
<div class="a" style="left:1207px;top:539px;width:345px;height:21px;background:#d3d3d3"></div>
<div class="a" style="left:1207px;top:559px;width:345px;height:1px;background:#999"></div>
<div class="a" style="left:1207px;top:577px;width:345px;height:1px;background:#aaa"></div>
<div class="a" style="left:1207px;top:594px;width:345px;height:1px;background:#aaa"></div>
<div class="a" style="left:1207px;top:611px;width:345px;height:1px;background:#aaa"></div>
<div class="a" style="left:1207px;top:628px;width:345px;height:1px;background:#aaa"></div>
<div class="a" style="left:1419px;top:539px;width:1px;height:106px;background:#999"></div>
<div class="a t" style="left:1211.7px;top:538.00px;font-size:9.2px;color:#111111;font-weight:bold;-webkit-text-stroke:0.1px currentColor;">Description</div>
<div class="a t" style="left:1424px;top:538.00px;font-size:9.2px;color:#111111;font-weight:bold;-webkit-text-stroke:0.1px currentColor;">Amount</div>
<div class="a t" style="left:1211.7px;top:560.00px;font-size:9.2px;color:#111111;-webkit-text-stroke:0.25px currentColor;">Total Capital Commitment</div>
<div class="a t" style="left:1424px;top:560.00px;font-size:9.2px;color:#111111;-webkit-text-stroke:0.25px currentColor;">$10,000,000.00</div>
<div class="a t" style="left:1211.7px;top:577.00px;font-size:9.2px;color:#111111;-webkit-text-stroke:0.25px currentColor;">Capital Previously Called</div>
<div class="a t" style="left:1424px;top:577.00px;font-size:9.2px;color:#111111;-webkit-text-stroke:0.25px currentColor;">$3,500,000.00</div>
<div class="a t" style="left:1211.7px;top:594.00px;font-size:9.2px;color:#111111;-webkit-text-stroke:0.25px currentColor;">Current Capital Call Amount</div>
<div class="a t" style="left:1424px;top:594.00px;font-size:9.2px;color:#111111;-webkit-text-stroke:0.25px currentColor;">$1,500,000.00</div>
<div class="a t" style="left:1211.7px;top:611.00px;font-size:9.2px;color:#111111;-webkit-text-stroke:0.25px currentColor;">Total Capital Called to Date (including this call)</div>
<div class="a t" style="left:1424px;top:611.00px;font-size:9.2px;color:#111111;-webkit-text-stroke:0.25px currentColor;">$5,000,000.00</div>
<div class="a t" style="left:1211.7px;top:628.00px;font-size:9.2px;color:#111111;-webkit-text-stroke:0.25px currentColor;">Remaining Commitment</div>
<div class="a t" style="left:1424px;top:628.00px;font-size:9.2px;color:#111111;-webkit-text-stroke:0.25px currentColor;">$5,000,000.00</div>
<div class="a t" style="left:1168.5px;top:663.00px;font-size:10.15px;color:#111111;font-weight:bold;-webkit-text-stroke:0.1px currentColor;">Purpose of Capital Call</div>
<div class="a t" style="left:1168.5px;top:678.00px;font-size:10.15px;color:#111111;-webkit-text-stroke:0.25px currentColor;">The proceeds from this capital call will be used to fund upcoming portfolio investments and</div>
<div class="a t" style="left:1168.5px;top:692.00px;font-size:10.15px;color:#111111;-webkit-text-stroke:0.25px currentColor;">related partnership expenses in accordance with the Partnership’s investment strategy.</div>
<div class="a t" style="left:1168.5px;top:727.00px;font-size:10.15px;color:#111111;font-weight:bold;-webkit-text-stroke:0.1px currentColor;">Payment Instructions</div>
<div class="a" style="left:1137px;top:740px;width:448px;height:40px;overflow:hidden"><div class="a t" style="left:31.5px;top:2.00px;font-size:10.15px;color:#111111;-webkit-text-stroke:0.25px currentColor;">Please remit your capital contribution of <b>$1,500,000.00</b> no later than <b>November 1, 2025</b> to the</div></div>
<div class="a t" style="left:1168.5px;top:756.00px;font-size:10.15px;color:#111111;-webkit-text-stroke:0.25px currentColor;">following account:</div>
<div class="a t" style="left:1168.5px;top:784.00px;font-size:10.15px;color:#111111;-webkit-text-stroke:0.25px currentColor;"><b>Bank Name:</b> First National Bank of New York</div>
<svg class="a" style="left:1534px;top:765px" width="27" height="27" viewBox="0 0 27 27"><circle cx="13.4" cy="13.1" r="12.6" fill="#b80f06"/><g fill="none" stroke="#fff" stroke-linecap="round"><path d="M13.3 5.5 Q13.3 9.5 13.8 12.8" stroke-width="1.6"/><ellipse cx="13.4" cy="6.8" rx="1" ry="1.8" stroke-width="1.1"/><path d="M13.8 12.8 L20.8 14.6" stroke-width="1.5"/><ellipse cx="20.6" cy="14.6" rx="1.6" ry="0.9" stroke-width="1.1"/><path d="M13.8 12.8 L7.3 18.2" stroke-width="1.6"/><ellipse cx="7.5" cy="18" rx="1.2" ry="1.6" transform="rotate(40 7.5 18)" stroke-width="1.1"/></g></svg>
<div class="a" style="left:1147px;top:820px;width:426px;height:25px;background:#89aed4;border-radius:3px"></div>
<svg class="a" style="left:1325px;top:825px" width="13" height="16" viewBox="0 0 13 16"><path d="M1.5 0.5 L8 0.5 L12.5 5 L12.5 14.5 Q12.5 15.5 11.5 15.5 L1.5 15.5 Q0.5 15.5 0.5 14.5 L0.5 1.5 Q0.5 0.5 1.5 0.5 Z" fill="#111"/><path d="M8.2 1.8 L11.2 5 L8.2 5 Z" fill="#89aed4"/><path d="M6.5 7.5 L6.5 12 M4 9.8 L6.5 12.5 L9 9.8" fill="none" stroke="#89aed4" stroke-width="1.6"/></svg>
<div class="a t" style="left:1343.7px;top:821.00px;font-size:11.1px;color:#0d0d0d;font-weight:bold;-webkit-text-stroke:0.1px currentColor;transform:scaleX(0.9901);transform-origin:0 0;">Download</div>
<div class="a" style="left:980px;top:855px;width:620px;height:72px;background:linear-gradient(to right, rgba(8,10,11,0) 0%, rgba(8,10,11,0.45) 12%, rgba(8,10,11,0.72) 24%, rgba(8,10,11,0.72) 62%, rgba(8,10,11,0.35) 85%, rgba(8,10,11,0) 100%);border-bottom-right-radius:10px"></div>
<div class="a t" style="left:626px;width:400px;text-align:center;top:890.00px;font-size:9.4px;color:#3a3a3a;">POWERED BY</div>
<div class="a t" style="left:775px;top:911.00px;font-size:21.8px;color:#3a3a3a;-webkit-text-stroke:0px currentColor;">AssetMetrix</div>
<svg class="a" style="left:752px;top:910px" width="20" height="20" viewBox="0 0 20 20"><defs><clipPath id="lc2"><circle cx="10" cy="10" r="9.5"/></clipPath></defs><g clip-path="url(#lc2)"><rect width="20" height="20" fill="#3a3a3a"/><path d="M-1 8 Q10 3 21 3.5 M-1 13 Q10 8 21 8.5 M-1 18 Q10 12.5 21 13.5" fill="none" stroke="#1c1c1c" stroke-width="1.6"/></g></svg>
</div></body></html>
